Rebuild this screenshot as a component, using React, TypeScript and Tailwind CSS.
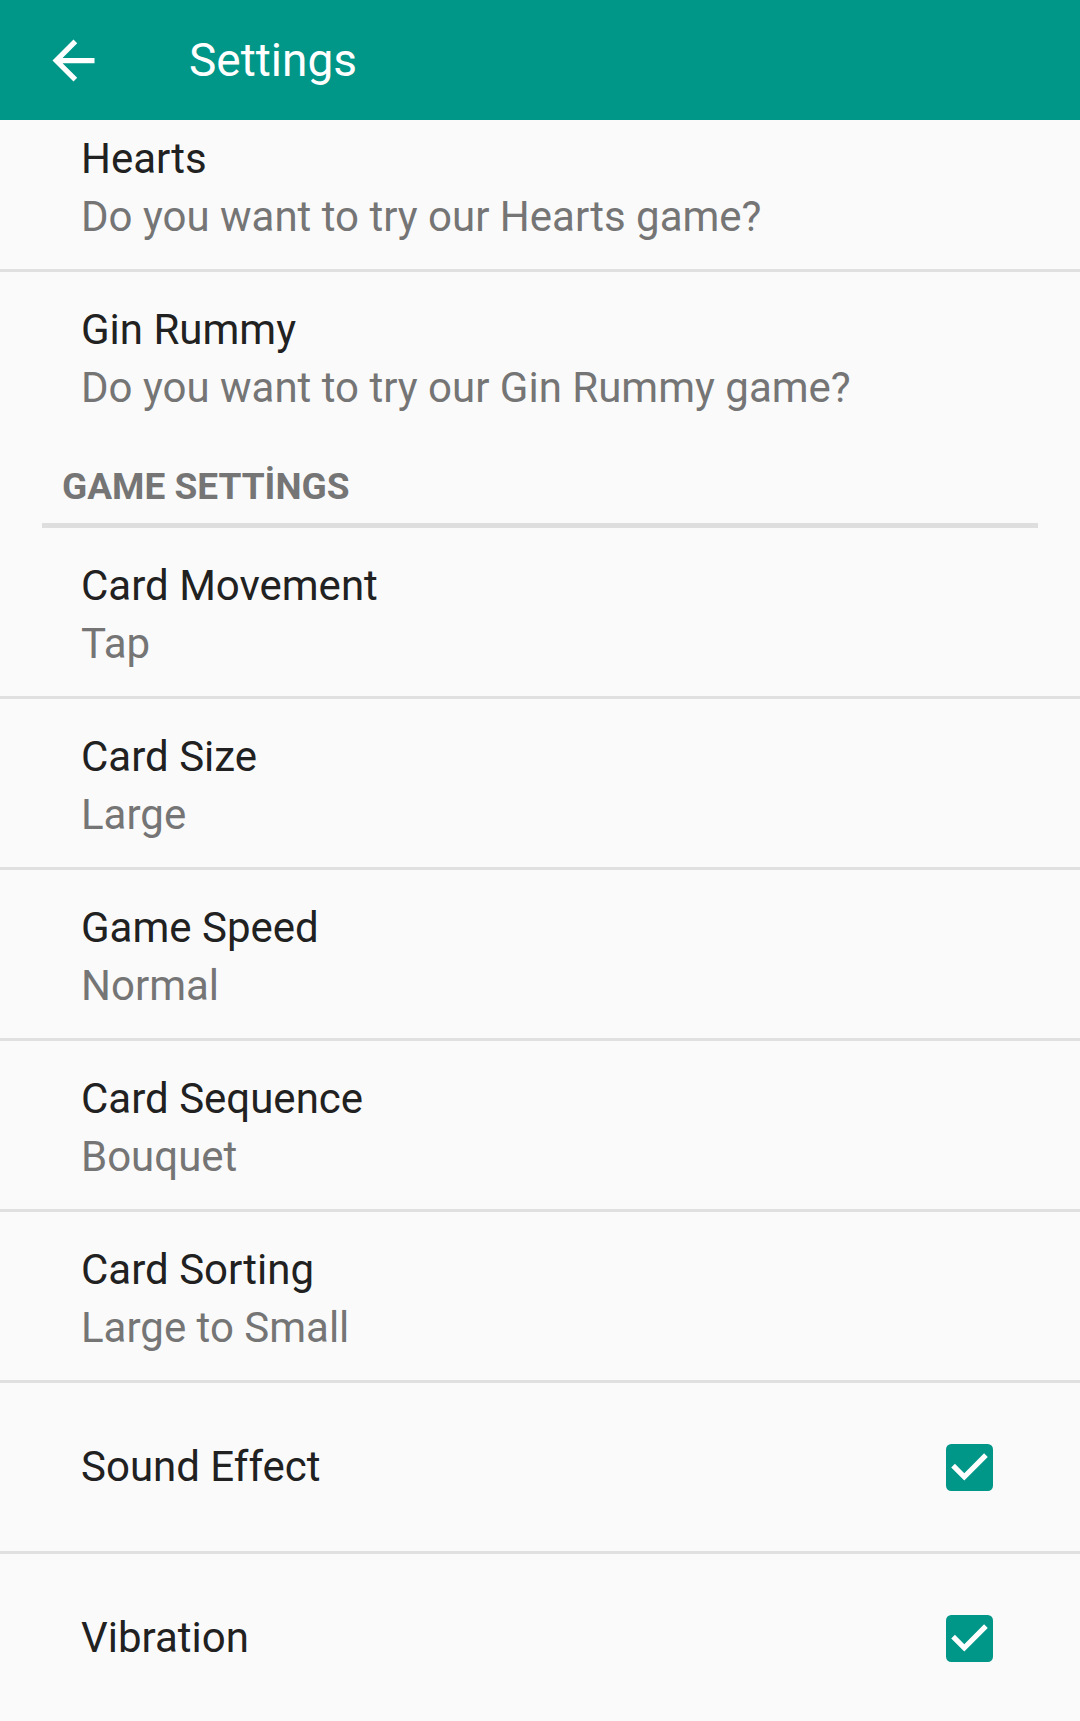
import React from "react";

type Pref = {
  title: string;
  summary?: string;
  checked?: boolean;
};

const topPrefs: Pref[] = [
  { title: "Hearts", summary: "Do you want to try our Hearts game?" },
  { title: "Gin Rummy", summary: "Do you want to try our Gin Rummy game?" },
];

const gamePrefs: Pref[] = [
  { title: "Card Movement", summary: "Tap" },
  { title: "Card Size", summary: "Large" },
  { title: "Game Speed", summary: "Normal" },
  { title: "Card Sequence", summary: "Bouquet" },
  { title: "Card Sorting", summary: "Large to Small" },
  { title: "Sound Effect", checked: true },
  { title: "Vibration", checked: true },
];

const BackArrow = () => (
  <svg viewBox="0 0 24 24" className="w-[63px] h-[63px]" fill="#ffffff">
    <path d="M20 11H7.83l5.59-5.59L12 4l-8 8 8 8 1.41-1.41L7.83 13H20v-2z" />
  </svg>
);

const CheckBox = () => (
  <svg viewBox="3 3 18 18" className="w-[47px] h-[47px]">
    <rect x="3" y="3" width="18" height="18" rx="2" fill="#009688" />
    <path
      d="M10 17l-5-5 1.41-1.41L10 14.17l7.59-7.59L19 8l-9 9z"
      fill="#ffffff"
    />
  </svg>
);

const Divider = () => <div className="h-[3px] bg-[#e0e0e0]" />;

const PrefRow = ({ pref }: { pref: Pref }) => {
  if (pref.summary === undefined) {
    return (
      <div className="h-[168px] flex items-center justify-between pl-[81px] pr-[87px]">
        <span className="text-[42px] leading-[58px] text-[#212121]">
          {pref.title}
        </span>
        {pref.checked && <CheckBox />}
      </div>
    );
  }
  return (
    <div className="h-[168px] flex flex-col pl-[81px] pt-[29px]">
      <span className="text-[42px] leading-[58px] text-[#212121] whitespace-nowrap">
        {pref.title}
      </span>
      <span className="text-[42px] leading-[58px] text-[#757575] whitespace-nowrap">
        {pref.summary}
      </span>
    </div>
  );
};

export default function App() {
  return (
    <div
      className="w-[1080px] h-[1721px] overflow-hidden flex flex-col bg-[#fafafa]"
      style={{ fontFamily: "Roboto, 'Noto Sans', sans-serif" }}
    >
      <header className="h-[120px] shrink-0 bg-[#009688] flex items-center z-10">
        <div className="w-[147px] pl-[42px] flex items-center">
          <BackArrow />
        </div>
        <h1 className="ml-[42px] text-[46px] leading-none text-white font-normal">
          Settings
        </h1>
      </header>

      <div className="flex-1 overflow-hidden">
        <div className="-mt-[19px]">
          {topPrefs.map((p, i) => (
            <React.Fragment key={p.title}>
              <PrefRow pref={p} />
              {i < topPrefs.length - 1 && <Divider />}
            </React.Fragment>
          ))}

          <div className="h-[83px] pl-[62px] pt-[25px]">
            <span className="text-[37px] leading-[44px] font-bold text-[#757575]">
              GAME SETTİNGS
            </span>
          </div>
          <div className="h-[5px] mx-[42px] bg-[#dedede]" />

          {gamePrefs.map((p, i) => (
            <React.Fragment key={p.title}>
              <PrefRow pref={p} />
              {i < gamePrefs.length - 1 && <Divider />}
            </React.Fragment>
          ))}
        </div>
      </div>
    </div>
  );
}
